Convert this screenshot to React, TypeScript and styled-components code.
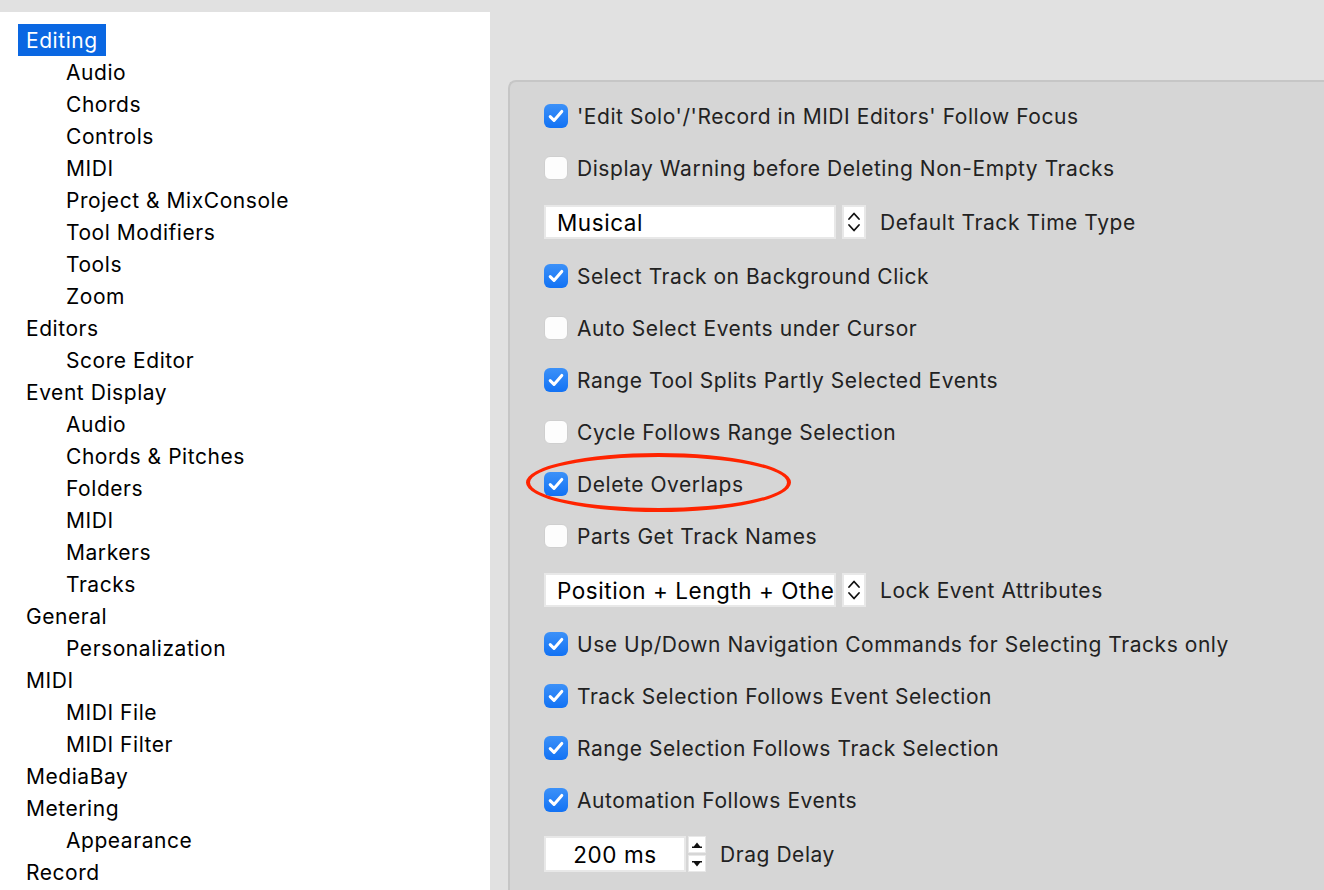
import React from "react";
import styled, { createGlobalStyle, css } from "styled-components";

const GlobalStyle = createGlobalStyle`
  html, body {
    margin: 0;
    padding: 0;
  }
  body {
    font-family: Inter, "Noto Sans", "Liberation Sans", sans-serif;
    -webkit-font-smoothing: antialiased;
  }
`;

const Window = styled.div`
  width: 1324px;
  height: 890px;
  padding-top: 12px;
  box-sizing: border-box;
  background-color: #e1e1e1;
  display: flex;
  overflow: hidden;
`;

const Sidebar = styled.nav`
  width: 490px;
  flex-shrink: 0;
  background-color: #ffffff;
  padding-top: 12px;
  box-sizing: border-box;
`;

const TreeItem = styled.div<{ $level: number; $selected?: boolean }>`
  height: 32px;
  display: flex;
  align-items: center;
  font-size: 21px;
  letter-spacing: 0.55px;
  color: #000;
  padding-left: ${(p) => (p.$level === 0 ? 18 : 66)}px;

  span {
    display: inline-flex;
    align-items: center;
    height: 32px;
    padding: 0 ${(p) => (p.$level === 0 ? 8 : 0)}px;
    ${(p) =>
      p.$selected &&
      css`
        background-color: #0a67e2;
        color: #fff;
      `}
  }
`;

const Content = styled.main`
  flex: 1;
  padding: 68px 0 0 18px;
  min-width: 0;
`;

const Panel = styled.section`
  height: 100%;
  margin-right: -20px;
  background-color: #d6d6d6;
  border: 2px solid #c6c6c6;
  border-right: none;
  border-bottom: none;
  border-top-left-radius: 8px;
  padding: 8px 0 0 34px;
  box-sizing: border-box;
`;

const Row = styled.div<{ $tall?: boolean }>`
  position: relative;
  height: ${(p) => (p.$tall ? 56 : 52)}px;
  display: flex;
  align-items: center;
  font-size: 21px;
  letter-spacing: 0.55px;
  color: #222;
  white-space: nowrap;
`;

const Box = styled.span<{ $checked?: boolean }>`
  width: 24px;
  height: 24px;
  box-sizing: border-box;
  border-radius: 6px;
  margin-right: 9px;
  display: inline-flex;
  align-items: center;
  justify-content: center;
  flex-shrink: 0;
  ${(p) =>
    p.$checked
      ? css`
          background: linear-gradient(#3c91f8, #1272f4);
        `
      : css`
          background: #fdfdfd;
          border: 1px solid #cfcfcf;
        `}
`;

const Field = styled.div<{ $width: number; $center?: boolean }>`
  width: ${(p) => p.$width}px;
  height: ${(p) => (p.$center ? 36 : 34)}px;
  box-sizing: border-box;
  background: #fff;
  border: 2px solid #e8e8e8;
  display: flex;
  align-items: center;
  justify-content: ${(p) => (p.$center ? "center" : "flex-start")};
  padding-left: ${(p) => (p.$center ? 0 : 11)}px;
  overflow: hidden;
  font-size: 22.5px;
  color: #000;
`;

const Chevrons = styled.div`
  width: 24px;
  height: 34px;
  margin-left: 6px;
  box-sizing: border-box;
  background: #fff;
  border: 2px solid #e8e8e8;
  display: flex;
  align-items: center;
  justify-content: center;
`;

const Spinner = styled.div`
  width: 18px;
  height: 36px;
  margin-left: 2px;
  display: flex;
  flex-direction: column;
  gap: 2px;
`;

const SpinHalf = styled.div`
  flex: 1;
  background: #fff;
  border: 1px solid #e8e8e8;
  display: flex;
  align-items: center;
  justify-content: center;
`;

const FieldLabel = styled.span`
  margin-left: 14px;
`;

const Highlight = styled.div`
  position: absolute;
  left: -18px;
  top: -5px;
  width: 265px;
  height: 59px;
  box-sizing: border-box;
  border: 4px solid #ff2400;
  border-radius: 50%;
  pointer-events: none;
`;

type Node = { label: string; level: number };

const tree: Node[] = [
  { label: "Editing", level: 0 },
  { label: "Audio", level: 1 },
  { label: "Chords", level: 1 },
  { label: "Controls", level: 1 },
  { label: "MIDI", level: 1 },
  { label: "Project & MixConsole", level: 1 },
  { label: "Tool Modifiers", level: 1 },
  { label: "Tools", level: 1 },
  { label: "Zoom", level: 1 },
  { label: "Editors", level: 0 },
  { label: "Score Editor", level: 1 },
  { label: "Event Display", level: 0 },
  { label: "Audio", level: 1 },
  { label: "Chords & Pitches", level: 1 },
  { label: "Folders", level: 1 },
  { label: "MIDI", level: 1 },
  { label: "Markers", level: 1 },
  { label: "Tracks", level: 1 },
  { label: "General", level: 0 },
  { label: "Personalization", level: 1 },
  { label: "MIDI", level: 0 },
  { label: "MIDI File", level: 1 },
  { label: "MIDI Filter", level: 1 },
  { label: "MediaBay", level: 0 },
  { label: "Metering", level: 0 },
  { label: "Appearance", level: 1 },
  { label: "Record", level: 0 },
];

type Setting =
  | { kind: "check"; label: string; checked: boolean; marked?: boolean }
  | { kind: "select"; label: string; value: string }
  | { kind: "number"; label: string; value: string };

const settings: Setting[] = [
  { kind: "check", label: "'Edit Solo'/'Record in MIDI Editors' Follow Focus", checked: true },
  { kind: "check", label: "Display Warning before Deleting Non-Empty Tracks", checked: false },
  { kind: "select", label: "Default Track Time Type", value: "Musical" },
  { kind: "check", label: "Select Track on Background Click", checked: true },
  { kind: "check", label: "Auto Select Events under Cursor", checked: false },
  { kind: "check", label: "Range Tool Splits Partly Selected Events", checked: true },
  { kind: "check", label: "Cycle Follows Range Selection", checked: false },
  { kind: "check", label: "Delete Overlaps", checked: true, marked: true },
  { kind: "check", label: "Parts Get Track Names", checked: false },
  { kind: "select", label: "Lock Event Attributes", value: "Position + Length + Other" },
  { kind: "check", label: "Use Up/Down Navigation Commands for Selecting Tracks only", checked: true },
  { kind: "check", label: "Track Selection Follows Event Selection", checked: true },
  { kind: "check", label: "Range Selection Follows Track Selection", checked: true },
  { kind: "check", label: "Automation Follows Events", checked: true },
  { kind: "number", label: "Drag Delay", value: "200 ms" },
];

function Tick() {
  return (
    <svg width="16" height="14" viewBox="0 0 16 14">
      <path
        d="M2.2 7.6 L6 11.4 L13.8 2.4"
        fill="none"
        stroke="#fff"
        strokeWidth="3"
        strokeLinecap="round"
        strokeLinejoin="round"
      />
    </svg>
  );
}

function UpDown() {
  return (
    <svg width="14" height="26" viewBox="0 0 14 26">
      <path
        d="M2 10 L7 4.5 L12 10 M2 16 L7 21.5 L12 16"
        fill="none"
        stroke="#111"
        strokeWidth="1.8"
        strokeLinecap="round"
        strokeLinejoin="round"
      />
    </svg>
  );
}

function StepArrow({ down }: { down?: boolean }) {
  return (
    <svg width="12" height="8" viewBox="0 0 12 8">
      {down ? (
        <path d="M1 1 H11 V2.4 H9.2 L6 6.6 L2.8 2.4 H1 Z" fill="#111" />
      ) : (
        <path d="M6 1.4 L9.2 5.6 H11 V7 H1 V5.6 H2.8 Z" fill="#111" />
      )}
    </svg>
  );
}

function SettingRow({ item }: { item: Setting }) {
  if (item.kind === "check") {
    return (
      <Row>
        <Box $checked={item.checked}>{item.checked && <Tick />}</Box>
        {item.label}
        {item.marked && <Highlight />}
      </Row>
    );
  }
  if (item.kind === "select") {
    return (
      <Row $tall>
        <Field $width={292}>{item.value}</Field>
        <Chevrons>
          <UpDown />
        </Chevrons>
        <FieldLabel>{item.label}</FieldLabel>
      </Row>
    );
  }
  return (
    <Row $tall>
      <Field $width={142} $center>
        {item.value}
      </Field>
      <Spinner>
        <SpinHalf>
          <StepArrow />
        </SpinHalf>
        <SpinHalf>
          <StepArrow down />
        </SpinHalf>
      </Spinner>
      <FieldLabel>{item.label}</FieldLabel>
    </Row>
  );
}

export default function App() {
  return (
    <>
      <GlobalStyle />
      <Window>
        <Sidebar>
          {tree.map((node, i) => (
            <TreeItem key={i} $level={node.level} $selected={i === 0}>
              <span>{node.label}</span>
            </TreeItem>
          ))}
        </Sidebar>
        <Content>
          <Panel>
            {settings.map((item, i) => (
              <SettingRow key={i} item={item} />
            ))}
          </Panel>
        </Content>
      </Window>
    </>
  );
}
